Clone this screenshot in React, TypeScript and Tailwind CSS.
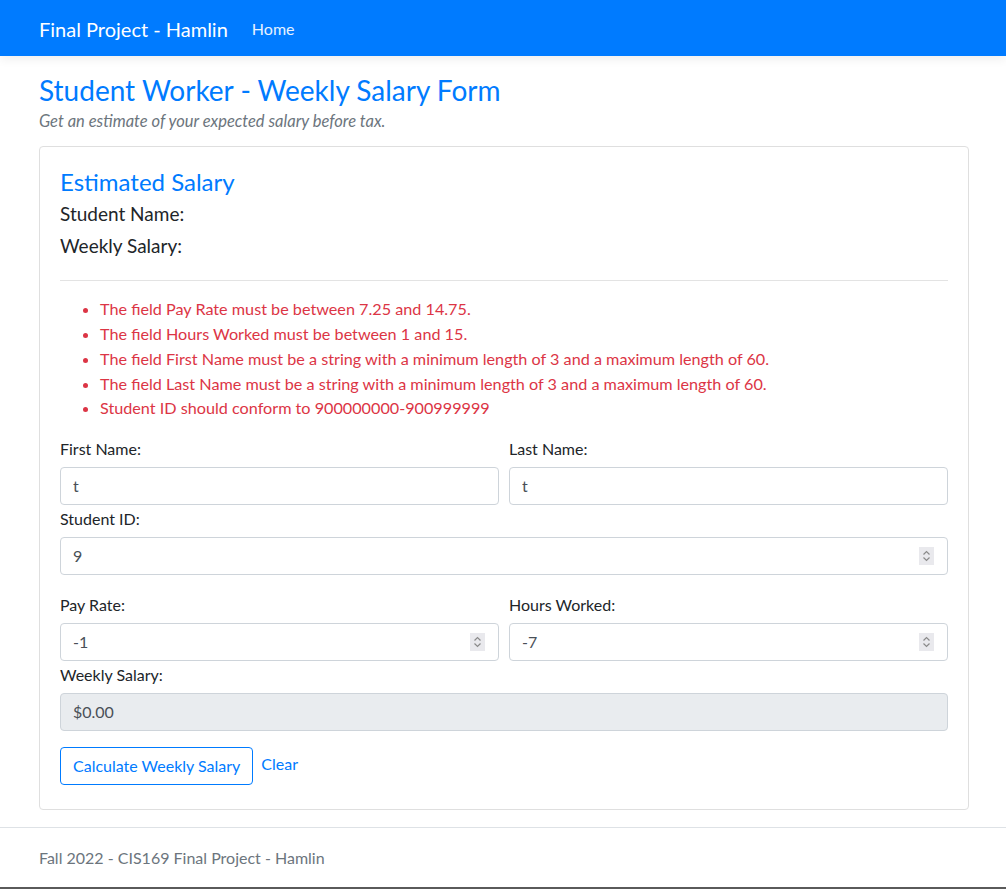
import { FC } from 'react';

const errors = [
  'The field Pay Rate must be between 7.25 and 14.75.',
  'The field Hours Worked must be between 1 and 15.',
  'The field First Name must be a string with a minimum length of 3 and a maximum length of 60.',
  'The field Last Name must be a string with a minimum length of 3 and a maximum length of 60.',
  'Student ID should conform to 900000000-900999999',
];

const Spinner: FC = () => (
  <span className="absolute right-[14px] top-1/2 -translate-y-1/2 w-[15px] h-[18px] bg-[#e9e9ed] flex items-center justify-center">
    <svg width="9" height="12" viewBox="0 0 9 12" fill="none" stroke="#8a8a8a" strokeWidth="1.2">
      <path d="M1.5 4.5 L4.5 1.5 L7.5 4.5" />
      <path d="M1.5 7.5 L4.5 10.5 L7.5 7.5" />
    </svg>
  </span>
);

const Field: FC<{ label: string; value: string; spinner?: boolean; disabled?: boolean }> = ({
  label,
  value,
  spinner,
  disabled,
}) => (
  <div className="flex flex-col">
    <label className="leading-6 mb-[6px] text-[#212529]">{label}</label>
    <div className="relative">
      <input
        readOnly
        value={value}
        className={`w-full h-[38px] px-3 rounded border border-[#ced4da] text-[#495057] outline-none ${
          disabled ? 'bg-[#e9ecef]' : 'bg-white'
        }`}
      />
      {spinner && <Spinner />}
    </div>
  </div>
);

export default function App() {
  return (
    <div className="min-h-[889px] flex flex-col bg-white font-['Lato','Liberation_Sans',sans-serif] text-base text-[#212529]">
      {/* Navbar */}
      <nav className="h-14 bg-[#007bff] flex items-center pl-[39px] shadow-[0_3px_10px_rgba(0,0,0,0.07)]">
        <span className="text-white text-[20px] mr-6 mt-[2px]">Final Project - Hamlin</span>
        <span className="text-white/90 text-base mt-[2px]">Home</span>
      </nav>

      <main className="flex-1 ml-[39px] w-[930px] pt-[18px]">
        <h3 className="text-[#007bff] text-[28px] leading-[1.2]">Student Worker - Weekly Salary Form</h3>
        <p className="italic text-[#6c757d] text-[16.5px] leading-6 mb-[13px] mt-[1px]">
          Get an estimate of your expected salary before tax.
        </p>

        <div className="border border-[#dfdfdf] rounded px-5 pt-[21px] pb-6">
          <h4 className="text-[#007bff] text-[24px] leading-[1.2] mb-[6px]">Estimated Salary</h4>
          <h5 className="text-[19px] leading-6 mb-2">Student Name:</h5>
          <h5 className="text-[19px] leading-6">Weekly Salary:</h5>
          <hr className="mt-[22px] mb-4 border-t border-[#e3e3e3]" />

          <ul className="list-disc pl-10 text-[#dc3545] text-[16.2px] leading-[24.7px] mb-4">
            {errors.map((e) => (
              <li key={e}>{e}</li>
            ))}
          </ul>

          <div className="grid grid-cols-2 gap-x-[10px]">
            <Field label="First Name:" value="t" />
            <Field label="Last Name:" value="t" />
          </div>
          <div className="mt-[2px] mb-[18px]">
            <Field label="Student ID:" value="9" spinner />
          </div>
          <div className="grid grid-cols-2 gap-x-[10px]">
            <Field label="Pay Rate:" value="-1" spinner />
            <Field label="Hours Worked:" value="-7" spinner />
          </div>
          <div className="mt-[2px] mb-4">
            <Field label="Weekly Salary:" value="$0.00" disabled />
          </div>

          <div className="flex items-start gap-2">
            <button className="h-[38px] px-3 rounded border border-[#007bff] text-[#007bff] bg-white">
              Calculate Weekly Salary
            </button>
            <a className="text-[#007bff] leading-6 mt-[5px]">Clear</a>
          </div>
        </div>
      </main>

      <footer className="mt-[17px] border-t border-[#dee2e6] h-[60px] flex items-center pl-[39px] text-[#6c757d] text-base">
        <span className="mt-[2px]">Fall 2022 - CIS169 Final Project - Hamlin</span>
      </footer>
      <div className="h-[3px] bg-[#5a5a5a]" />
    </div>
  );
}
